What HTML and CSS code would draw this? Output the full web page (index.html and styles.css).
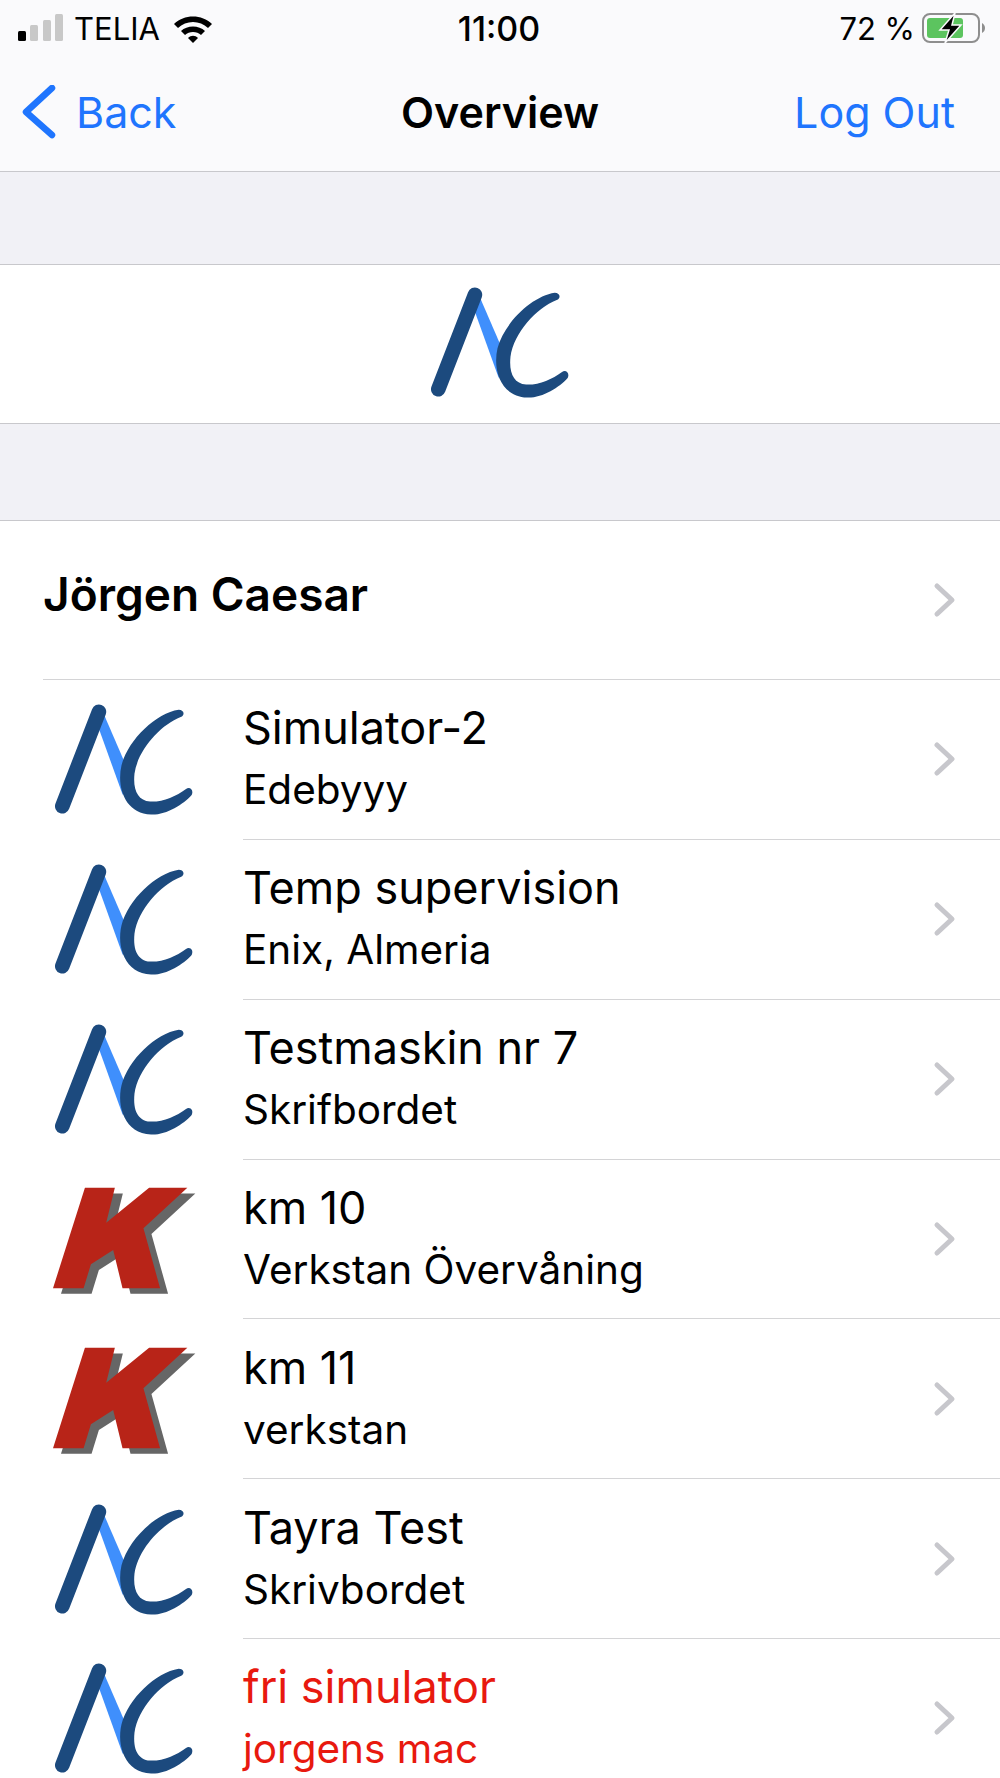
FILE: index.html
```html
<!DOCTYPE html>
<html lang="en">

    <head>
        <meta charset="UTF-8">
        <meta name="viewport" content="width=device-width, initial-scale=1.0">
        <title>Overview</title>
        <link rel="stylesheet" href="styles.css">
    </head>

    <body>

        <svg class="defs" width="0" height="0">
            <symbol id="logo-ac" viewBox="90 45 430 345">
                <polygon points="240,75 305,225 300,325 228,125" fill="#3f8ffc"></polygon>
                <line x1="228" y1="74" x2="118" y2="358" stroke="#1c4a7e" stroke-width="44" stroke-linecap="round"></line>
                <path fill="#1c4a7e" d="M468 68C400 78 316 158 296 235C281 300 306 380 385 383C430 385 482 352 507 324C514 310 502 298 490 306C460 328 420 346 382 344C345 341 330 310 335 260C345 190 412 114 474 90C488 84 484 68 468 68Z"></path>
            </symbol>
            <symbol id="logo-k" viewBox="66 36 430 345" overflow="visible">
                <polygon transform="translate(24 17)" fill="#666666" points="162,53 252,53 226,158 355,53 470,53 338,175 388,355 275,355 247,240 180,283 158,355 66,355"></polygon>
                <polygon fill="#b82418" points="162,53 252,53 226,158 355,53 470,53 338,175 388,355 275,355 247,240 180,283 158,355 66,355"></polygon>
            </symbol>
            <symbol id="chevron" viewBox="0 0 24 36">
                <polyline points="4,4 19,18 4,32" fill="none" stroke="#c7c7cc" stroke-width="5" stroke-linecap="round" stroke-linejoin="round"></polyline>
            </symbol>
        </svg>

        <header class="topbar">
            <div class="status">
                <div class="status-left">
                    <svg class="signal" width="46" height="28" viewBox="0 0 46 28">
                        <rect x="0" y="17" width="8" height="10" rx="1.5" fill="#000"></rect>
                        <rect x="12" y="11" width="8" height="16" rx="1.5" fill="#c8c8c8"></rect>
                        <rect x="25" y="6" width="8" height="21" rx="1.5" fill="#c8c8c8"></rect>
                        <rect x="37" y="0" width="8" height="27" rx="1.5" fill="#c8c8c8"></rect>
                    </svg>
                    <span class="carrier">TELIA</span>
                    <svg class="wifi" width="40" height="29" viewBox="0 0 40 29">
                        <path d="M1 10C11 0 29 0 39 10L35 14C27 6 13 6 5 14Z"></path>
                        <path d="M8 17C14 11 26 11 32 17L28 21C24 17 16 17 12 21Z"></path>
                        <path d="M15 24C18 21 22 21 25 24L20 29Z"></path>
                    </svg>
                </div>
                <div class="clock">11:00</div>
                <div class="status-right">
                    <span class="percent">72 %</span>
                    <svg class="battery" width="64" height="30" viewBox="0 0 64 30">
                        <rect x="1" y="1" width="56" height="28" rx="7" fill="none" stroke="#8e8e8e" stroke-width="2"></rect>
                        <path d="M60 10C62 11 63 13 63 15C63 17 62 19 60 20Z" fill="#8e8e8e"></path>
                        <rect x="5" y="5" width="36" height="20" rx="3" fill="#5cc45f"></rect>
                        <path d="M33 0L18 17H27L23 30L39 12H30Z" fill="#000" stroke="#fafafc" stroke-width="1.5"></path>
                    </svg>
                </div>
            </div>
            <nav class="navbar">
                <a class="nav-back">
                    <svg width="34" height="54" viewBox="0 0 34 54">
                        <polyline points="30,3 4,27 30,50" fill="none" stroke="#1f75fe" stroke-width="6.5" stroke-linecap="round" stroke-linejoin="round"></polyline>
                    </svg>
                    Back
                </a>
                <div class="nav-title">Overview</div>
                <a class="nav-logout">Log Out</a>
            </nav>
        </header>

        <div class="band"></div>

        <div class="brand">
            <svg class="logo"><use href="#logo-ac"></use></svg>
        </div>

        <div class="band band-low"></div>

        <main class="list">
            <div class="account">
                <span class="account-name">Jörgen Caesar</span>
                <svg class="chev"><use href="#chevron"></use></svg>
            </div>

            <div class="item first">
                <svg class="logo"><use href="#logo-ac"></use></svg>
                <div class="item-body">
                    <div class="item-text">
                        <div class="item-title">Simulator-2</div>
                        <div class="item-sub">Edebyyy</div>
                    </div>
                    <svg class="chev"><use href="#chevron"></use></svg>
                </div>
            </div>

            <div class="item">
                <svg class="logo"><use href="#logo-ac"></use></svg>
                <div class="item-body">
                    <div class="item-text">
                        <div class="item-title">Temp supervision</div>
                        <div class="item-sub">Enix, Almeria</div>
                    </div>
                    <svg class="chev"><use href="#chevron"></use></svg>
                </div>
            </div>

            <div class="item">
                <svg class="logo"><use href="#logo-ac"></use></svg>
                <div class="item-body">
                    <div class="item-text">
                        <div class="item-title">Testmaskin nr 7</div>
                        <div class="item-sub">Skrifbordet</div>
                    </div>
                    <svg class="chev"><use href="#chevron"></use></svg>
                </div>
            </div>

            <div class="item">
                <svg class="logo"><use href="#logo-k"></use></svg>
                <div class="item-body">
                    <div class="item-text">
                        <div class="item-title">km 10</div>
                        <div class="item-sub">Verkstan Övervåning</div>
                    </div>
                    <svg class="chev"><use href="#chevron"></use></svg>
                </div>
            </div>

            <div class="item">
                <svg class="logo"><use href="#logo-k"></use></svg>
                <div class="item-body">
                    <div class="item-text">
                        <div class="item-title">km 11</div>
                        <div class="item-sub">verkstan</div>
                    </div>
                    <svg class="chev"><use href="#chevron"></use></svg>
                </div>
            </div>

            <div class="item">
                <svg class="logo"><use href="#logo-ac"></use></svg>
                <div class="item-body">
                    <div class="item-text">
                        <div class="item-title">Tayra Test</div>
                        <div class="item-sub">Skrivbordet</div>
                    </div>
                    <svg class="chev"><use href="#chevron"></use></svg>
                </div>
            </div>

            <div class="item offline">
                <svg class="logo"><use href="#logo-ac"></use></svg>
                <div class="item-body">
                    <div class="item-text">
                        <div class="item-title">fri simulator</div>
                        <div class="item-sub">jorgens mac</div>
                    </div>
                    <svg class="chev"><use href="#chevron"></use></svg>
                </div>
            </div>
        </main>

    </body>

</html>
```

FILE: styles.css
```css
:root {
    --bar: #fafafc;
    --band: #f1f1f6;
    --line: #c8c8cc;
    --hair: #d4d4d6;
    --blue: #1f75fe;
    --red: #e8190f;
    --ink: #000000;
}

html,
body {
    margin: 0;
    padding: 0;
    height: 1778px;
    overflow: hidden;
}

body {
    background: #ffffff;
    color: var(--ink);
    font-family: 'Inter', 'Liberation Sans', sans-serif;
}

.defs {
    position: absolute;
}

.topbar {
    background: var(--bar);
    height: 171px;
    border-bottom: 1px solid var(--line);
}

.status {
    display: grid;
    grid-template-columns: 1fr auto 1fr;
    align-items: center;
    height: 56px;
    padding-left: 18px;
    padding-right: 14px;
}

.status-left,
.status-right {
    display: flex;
    align-items: center;
}

.status-right {
    justify-content: flex-end;
}

.signal {
    margin-right: 10px;
}

.carrier {
    font-size: 31px;
    margin-right: 13px;
}

.clock {
    font-size: 34px;
    font-weight: 500;
    margin-right: 6px;
}

.percent {
    font-size: 31px;
    margin-right: 7px;
}

.navbar {
    display: grid;
    grid-template-columns: 1fr auto 1fr;
    align-items: center;
    box-sizing: border-box;
    height: 115px;
    padding: 0 22px 4px;
}

.nav-back,
.nav-logout {
    color: var(--blue);
    font-size: 43px;
}

.nav-back {
    display: flex;
    align-items: center;
    gap: 20px;
}

.nav-logout {
    text-align: right;
    padding-right: 23px;
}

.nav-title {
    font-size: 43px;
    font-weight: 600;
}

.band {
    background: var(--band);
    height: 92px;
    border-bottom: 1px solid var(--line);
}

.band-low {
    height: 96px;
}

.brand {
    display: flex;
    justify-content: center;
    align-items: center;
    box-sizing: border-box;
    height: 159px;
    padding-bottom: 3px;
    border-bottom: 1px solid var(--line);
}

.logo {
    width: 143px;
    height: 115px;
    flex: none;
    overflow: visible;
}

.chev {
    width: 24px;
    height: 36px;
    flex: none;
}

.account {
    display: flex;
    justify-content: space-between;
    align-items: center;
    height: 158px;
    padding-left: 43px;
    padding-right: 43px;
}

.account-name {
    font-size: 46px;
    font-weight: 600;
    margin-bottom: 12px;
}

.item {
    position: relative;
    display: flex;
    align-items: center;
    height: 159.85px;
    padding-left: 53px;
}

.item .logo {
    margin-top: 2px;
    margin-right: 47px;
}

.item-body {
    flex: 1;
    display: flex;
    justify-content: space-between;
    align-items: center;
    align-self: stretch;
    padding-right: 43px;
    border-top: 1px solid var(--hair);
}

.item.first::before {
    content: "";
    position: absolute;
    left: 43px;
    right: 0;
    top: 0;
    border-top: 1px solid var(--hair);
}

.item-title {
    font-size: 45px;
    line-height: 62px;
}

.item-sub {
    font-size: 40.5px;
    line-height: 62px;
}

.offline .item-title,
.offline .item-sub {
    color: var(--red);
}
```
